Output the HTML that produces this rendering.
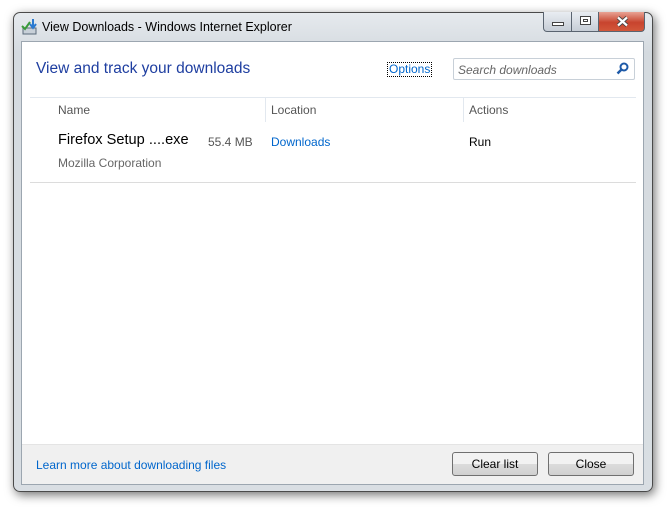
<!DOCTYPE html>
<html><head><meta charset="utf-8"><style>
*{margin:0;padding:0;box-sizing:border-box}
body{width:672px;height:512px;background:#fff;position:relative;overflow:hidden;font-family:"Liberation Sans",sans-serif;font-size:12px}
.frame{position:absolute;left:13px;top:12px;width:640px;height:480px;border:1px solid #4a4a4a;border-radius:7px;background:linear-gradient(#e6eaee,#d4dadf 40px,#d9dee3);box-shadow:2px 3px 10px rgba(0,0,0,.55)}
.title{position:absolute;left:42px;top:20px;font-size:12.5px;color:#000}
.inner{position:absolute;left:21px;top:41px;width:623px;height:444px;background:#fff;border:1px solid #9ca6b0}
.abs{position:absolute}
.btn{position:absolute;height:24px;border:1px solid #707070;border-radius:3px;background:linear-gradient(#f2f2f2 50%,#dcdcdc 50%,#d0d0d0);text-align:center;line-height:22px;font-size:12px;color:#000}
.cap{position:absolute;top:12px;height:20px;border:1px solid #5a6470;border-top:none}
</style></head><body>
<div class="frame"></div>
<div class="cap" style="left:543px;width:29px;border-radius:0 0 0 4px;background:linear-gradient(#e9edf2,#c6cdd6)"><div class="abs" style="left:8px;top:10px;width:12px;height:4px;border:1px solid #444;background:#fff"></div></div>
<div class="cap" style="left:571px;width:28px;background:linear-gradient(#e9edf2,#c6cdd6)"><div class="abs" style="left:8px;top:4px;width:11px;height:9px;border:1px solid #444;background:#fff"><div class="abs" style="left:2px;top:2px;width:5px;height:3px;border:1px solid #444"></div></div></div>
<div class="cap" style="left:598px;width:47px;border-radius:0 0 4px 0;background:linear-gradient(#e8a394,#c8442e 55%,#d2573a)"><svg class="abs" style="left:17px;top:4px" width="13" height="11" viewBox="0 0 13 11"><path d="M2 1.5l9 8M11 1.5l-9 8" stroke="#444" stroke-width="4"/><path d="M2 1.5l9 8M11 1.5l-9 8" stroke="#fff" stroke-width="2.2"/></svg></div>
<svg class="abs" style="left:21px;top:18px" width="18" height="18" viewBox="0 0 18 18"><rect x="2" y="10" width="13" height="6" fill="#c8d0d8" stroke="#5a6a7a"/><path d="M1 8l3 3 5-7" stroke="#3a9a3a" stroke-width="2" fill="none"/><path d="M12 1v8M9 6l3 4 3-4" stroke="#2a7ad0" stroke-width="2" fill="none"/></svg>
<div class="title">View Downloads - Windows Internet Explorer</div>
<div class="inner"></div>
<div class="abs" style="left:36px;top:60px;font-size:15.5px;color:#1e3ea0">View and track your downloads</div>
<div class="abs" style="left:387px;top:62px;padding:0 1px;border:1px dotted #000;color:#0066cc;font-size:12px;line-height:13px">Options</div>
<div class="abs" style="left:453px;top:58px;width:182px;height:22px;border:1px solid #c8d0d8;border-radius:2px"></div>
<div class="abs" style="left:458px;top:63px;font-style:italic;color:#666;font-size:12px">Search downloads</div>
<svg class="abs" style="left:616px;top:62px" width="13" height="13" viewBox="0 0 13 13"><circle cx="8" cy="5" r="3.5" stroke="#1e5aa8" stroke-width="2" fill="none"/><path d="M5.5 7.5L1.5 11.5" stroke="#1e5aa8" stroke-width="2.5"/></svg>
<div class="abs" style="left:30px;top:97px;width:606px;height:1px;background:#e2e8ef"></div>
<div class="abs" style="left:265px;top:98px;width:1px;height:24px;background:#e2e8ef"></div>
<div class="abs" style="left:463px;top:98px;width:1px;height:24px;background:#e2e8ef"></div>
<div class="abs" style="left:58px;top:103px;color:#555">Name</div>
<div class="abs" style="left:271px;top:103px;color:#555">Location</div>
<div class="abs" style="left:469px;top:103px;color:#555">Actions</div>
<div class="abs" style="left:58px;top:132px;font-size:14.6px;color:#000">Firefox Setup ....exe</div>
<div class="abs" style="left:208px;top:135px;color:#555">55.4 MB</div>
<div class="abs" style="left:271px;top:135px;color:#0066cc">Downloads</div>
<div class="abs" style="left:469px;top:135px;color:#000">Run</div>
<div class="abs" style="left:58px;top:156px;color:#666">Mozilla Corporation</div>
<div class="abs" style="left:30px;top:182px;width:606px;height:1px;background:#dcdcdc"></div>
<div class="abs" style="left:22px;top:444px;width:621px;height:40px;background:#f0f0f0;border-top:1px solid #e4e4e4"></div>
<div class="abs" style="left:36px;top:458px;color:#0066cc">Learn more about downloading files</div>
<div class="btn" style="left:452px;top:452px;width:86px">Clear list</div>
<div class="btn" style="left:548px;top:452px;width:86px">Close</div>
</body></html>
